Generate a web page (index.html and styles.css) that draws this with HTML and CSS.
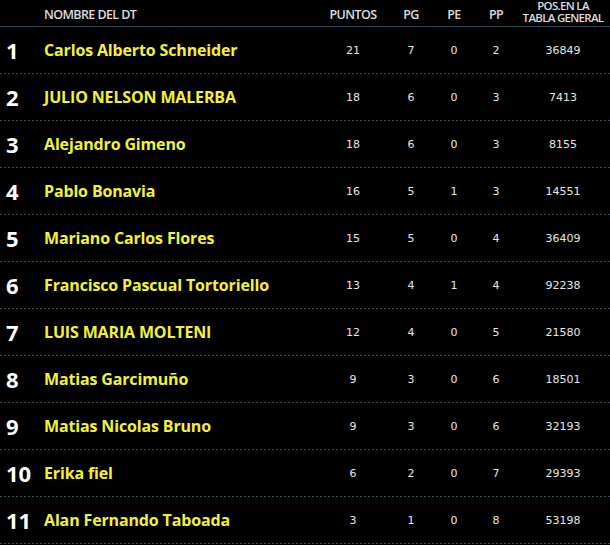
FILE: index.html
```html
<!DOCTYPE html>
<html>
<head>
<meta charset="utf-8">
<link rel="stylesheet" href="styles.css">
</head>
<body>
<div class="table">
  <div class="row head">
    <div class="c-rank"></div>
    <div class="c-name">NOMBRE DEL DT</div>
    <div class="c-num">PUNTOS</div>
    <div class="c-num">PG</div>
    <div class="c-num">PE</div>
    <div class="c-num">PP</div>
    <div class="c-num c-pos"><span>POS.EN LA</span><span>TABLA GENERAL</span></div>
  </div>
  <div class="row"><div class="c-rank">1</div><div class="c-name">Carlos Alberto Schneider</div><div class="c-num">21</div><div class="c-num">7</div><div class="c-num">0</div><div class="c-num">2</div><div class="c-num">36849</div></div>
  <div class="row"><div class="c-rank">2</div><div class="c-name">JULIO NELSON MALERBA</div><div class="c-num">18</div><div class="c-num">6</div><div class="c-num">0</div><div class="c-num">3</div><div class="c-num">7413</div></div>
  <div class="row"><div class="c-rank">3</div><div class="c-name">Alejandro Gimeno</div><div class="c-num">18</div><div class="c-num">6</div><div class="c-num">0</div><div class="c-num">3</div><div class="c-num">8155</div></div>
  <div class="row"><div class="c-rank">4</div><div class="c-name">Pablo Bonavia</div><div class="c-num">16</div><div class="c-num">5</div><div class="c-num">1</div><div class="c-num">3</div><div class="c-num">14551</div></div>
  <div class="row"><div class="c-rank">5</div><div class="c-name">Mariano Carlos Flores</div><div class="c-num">15</div><div class="c-num">5</div><div class="c-num">0</div><div class="c-num">4</div><div class="c-num">36409</div></div>
  <div class="row"><div class="c-rank">6</div><div class="c-name">Francisco Pascual Tortoriello</div><div class="c-num">13</div><div class="c-num">4</div><div class="c-num">1</div><div class="c-num">4</div><div class="c-num">92238</div></div>
  <div class="row"><div class="c-rank">7</div><div class="c-name">LUIS MARIA MOLTENI</div><div class="c-num">12</div><div class="c-num">4</div><div class="c-num">0</div><div class="c-num">5</div><div class="c-num">21580</div></div>
  <div class="row"><div class="c-rank">8</div><div class="c-name">Matias Garcimuño</div><div class="c-num">9</div><div class="c-num">3</div><div class="c-num">0</div><div class="c-num">6</div><div class="c-num">18501</div></div>
  <div class="row"><div class="c-rank">9</div><div class="c-name">Matias Nicolas Bruno</div><div class="c-num">9</div><div class="c-num">3</div><div class="c-num">0</div><div class="c-num">6</div><div class="c-num">32193</div></div>
  <div class="row"><div class="c-rank">10</div><div class="c-name">Erika fiel</div><div class="c-num">6</div><div class="c-num">2</div><div class="c-num">0</div><div class="c-num">7</div><div class="c-num">29393</div></div>
  <div class="row"><div class="c-rank">11</div><div class="c-name">Alan Fernando Taboada</div><div class="c-num">3</div><div class="c-num">1</div><div class="c-num">0</div><div class="c-num">8</div><div class="c-num">53198</div></div>
</div>
</body>
</html>
```
FILE: styles.css
```css
html, body {
  margin: 0;
  padding: 0;
  background: #000;
}
body {
  width: 610px;
  height: 545px;
  overflow: hidden;
}
.table {
  display: flex;
  flex-direction: column;
}
.row {
  display: grid;
  grid-template-columns: 44px 1fr 60px 56px 30px 54px 80px;
  padding-right: 7px;
  align-items: center;
  background-image: repeating-linear-gradient(90deg, #36505f 0 2px, transparent 2px 4px);
  background-size: 100% 1px;
  background-position: 0 100%;
  background-repeat: no-repeat;
  padding-bottom: 1px;
  box-sizing: border-box;
  height: 47px;
}
.row.head {
  height: 27px;
  background-image: none;
  border-bottom: 1px solid #2c4a5a;
  padding-bottom: 0;
  align-items: end;
}
.head > div {
  font-family: "Open Sans", sans-serif;
  font-weight: 600;
  font-size: 12.5px;
  color: #dedede;
  letter-spacing: -0.6px;
  line-height: 12px;
  padding-bottom: 5px;
  white-space: nowrap;
}
.head > .c-pos {
  font-size: 11.5px;
  letter-spacing: -0.7px;
  line-height: 11.5px;
  padding-bottom: 3px;
  display: flex;
  flex-direction: column;
  align-items: center;
}
.c-rank {
  font-family: "Open Sans", sans-serif;
  font-weight: 700;
  font-size: 22px;
  color: #fff;
  padding-left: 6px;
}
.c-name {
  font-family: "Open Sans", sans-serif;
  font-weight: 700;
  font-size: 16px;
  letter-spacing: -0.15px;
  color: #f2f23a;
}
.c-num {
  text-align: center;
  font-family: "DejaVu Sans", sans-serif;
  font-size: 11px;
  color: #e8e8e8;
}
```
